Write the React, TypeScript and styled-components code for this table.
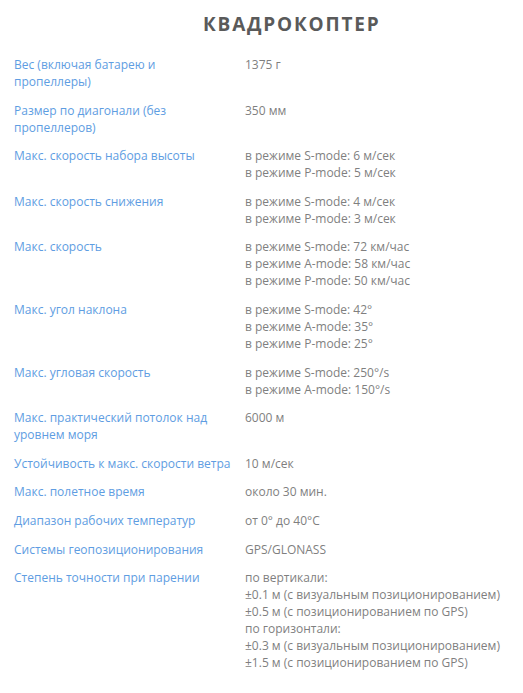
import React from 'react'
import styled, { createGlobalStyle } from 'styled-components'

const GlobalStyle = createGlobalStyle`
  body {
    margin: 0;
    background: #fff;
    font-family: "Open Sans", "Liberation Sans", sans-serif;
  }
`

const Page = styled.div`
  width: 523px;
  padding: 11px 0 0 14px;
  box-sizing: border-box;
`

const Title = styled.h2`
  margin: 0 0 13px 189px;
  font-family: "Open Sans", sans-serif;
  font-size: 19px;
  font-weight: 700;
  letter-spacing: 1.8px;
  color: #5a5a5a;
  line-height: 26px;
`

const Table = styled.div`
  display: flex;
  flex-direction: column;
`

const Row = styled.div`
  display: grid;
  grid-template-columns: 231px 1fr;
  padding: 6px 0 5.6px;
  font-size: 12px;
  line-height: 17px;
`

const Label = styled.div`
  color: #5e9de2;
  padding-right: 13px;
`

const Value = styled.div`
  color: #7f7f7f;
`

type Spec = { label: string; values: string[] }

const specs: Spec[] = [
  { label: 'Вес (включая батарею и пропеллеры)', values: ['1375 г'] },
  { label: 'Размер по диагонали (без пропеллеров)', values: ['350 мм'] },
  {
    label: 'Макс. скорость набора высоты',
    values: ['в режиме S-mode: 6 м/сек', 'в режиме P-mode: 5 м/сек']
  },
  {
    label: 'Макс. скорость снижения',
    values: ['в режиме S-mode: 4 м/сек', 'в режиме P-mode: 3 м/сек']
  },
  {
    label: 'Макс. скорость',
    values: [
      'в режиме S-mode: 72 км/час',
      'в режиме A-mode: 58 км/час',
      'в режиме P-mode: 50 км/час'
    ]
  },
  {
    label: 'Макс. угол наклона',
    values: ['в режиме S-mode: 42°', 'в режиме A-mode: 35°', 'в режиме P-mode: 25°']
  },
  {
    label: 'Макс. угловая скорость',
    values: ['в режиме S-mode: 250°/s', 'в режиме A-mode: 150°/s']
  },
  { label: 'Макс. практический потолок над уровнем моря', values: ['6000 м'] },
  { label: 'Устойчивость к макс. скорости ветра', values: ['10 м/сек'] },
  { label: 'Макс. полетное время', values: ['около 30 мин.'] },
  { label: 'Диапазон рабочих температур', values: ['от 0° до 40°C'] },
  { label: 'Системы геопозиционирования', values: ['GPS/GLONASS'] },
  {
    label: 'Степень точности при парении',
    values: [
      'по вертикали:',
      '±0.1 м (с визуальным позиционированием)',
      '±0.5 м (с позиционированием по GPS)',
      'по горизонтали:',
      '±0.3 м (с визуальным позиционированием)',
      '±1.5 м (с позиционированием по GPS)'
    ]
  }
]

const App: React.FC = () => {
  return (
    <>
      <GlobalStyle />
      <Page>
        <Title>КВАДРОКОПТЕР</Title>
        <Table>
          {specs.map((s) => (
            <Row key={s.label}>
              <Label>{s.label}</Label>
              <Value>
                {s.values.map((v) => (
                  <div key={v}>{v}</div>
                ))}
              </Value>
            </Row>
          ))}
        </Table>
      </Page>
    </>
  )
}

export default App
